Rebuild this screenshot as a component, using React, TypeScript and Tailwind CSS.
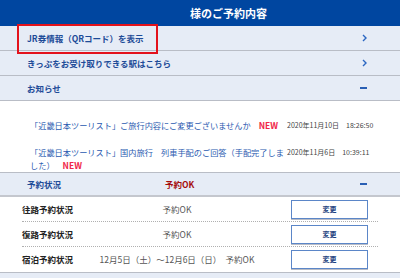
import React from "react";

const jp = { fontFamily: '"Noto Sans CJK JP", "Noto Sans", sans-serif' };

function Chevron() {
  return (
    <svg width="5" height="8" viewBox="0 0 5 8" className="shrink-0">
      <path d="M1 1 L4 4 L1 7" fill="none" stroke="#2a66c2" strokeWidth="1.4" />
    </svg>
  );
}

function Dash() {
  return <span className="block h-[2px] w-[7px] bg-[#2a5fb4]" />;
}

function MenuRow({ label, right }: { label: string; right: React.ReactNode }) {
  return (
    <div className="flex h-[25px] items-center justify-between border-b border-[#b9bdc6] bg-[#e6ecf6] pl-[27px] pr-[33px]">
      <span className="text-[8.5px] font-bold text-[#1d4b98]">{label}</span>
      {right}
    </div>
  );
}

const notices = [
  {
    title: "「近畿日本ツーリスト」ご旅行内容にご変更ございませんか",
    date: "2020年11月10日",
    time: "18:26:50",
  },
  {
    title: "「近畿日本ツーリスト」国内旅行　列車手配のご回答（手配完了しました）",
    date: "2020年11月6日",
    time: "10:39:11",
  },
];

const statuses = [
  { label: "往路予約状況", value: "予約OK" },
  { label: "復路予約状況", value: "予約OK" },
  { label: "宿泊予約状況", value: "12月5日（土）～12月6日（日）　予約OK" },
];

export default function App() {
  return (
    <div className="h-[278px] w-[400px] overflow-hidden bg-white" style={jp}>
      {/* title bar */}
      <div className="h-[26px] bg-[#0046a0] pl-[190px] text-[11px] font-bold leading-[26px] text-white">
        様のご予約内容
      </div>

      <div className="relative">
        <MenuRow label="JR券情報（QRコード）を表示" right={<Chevron />} />
        <div className="pointer-events-none absolute left-[17px] top-[-2px] h-[30px] w-[141px] border-2 border-[#e3121c]" />
      </div>
      <MenuRow label="きっぷをお受け取りできる駅はこちら" right={<Chevron />} />
      <MenuRow label="お知らせ" right={<Dash />} />

      {/* notices */}
      <div className="flex flex-col gap-[14px] border-b border-[#b9bdc6] pt-[18px] pl-[30px]">
        {notices.map((n) => (
          <div key={n.date} className="flex items-start">
            <p className="w-[257px] shrink-0 text-[8.2px] leading-[13px] text-[#2a5ab0]">
              {n.title}
              <span className="ml-[8px] whitespace-nowrap text-[8.5px] font-bold text-[#f0284a]">NEW</span>
            </p>
            <span className="text-[7px] leading-[13px] text-[#444]">{n.date}</span>
            <span className="ml-[7px] text-[7px] leading-[13px] text-[#444]">{n.time}</span>
          </div>
        ))}
      </div>

      {/* reservation status */}
      <div className="flex h-[24px] items-center border-b-2 border-[#c4c7ce] bg-[#e6ecf6] pl-[27px] pr-[33px]">
        <span className="w-[138px] text-[8.5px] font-bold text-[#1d4b98]">予約状況</span>
        <span className="text-[8.5px] font-bold text-[#a50d0d]">予約OK</span>
        <span className="ml-auto">
          <Dash />
        </span>
      </div>

      <div className="mx-[22px]">
        {statuses.map((s, i) => (
          <div
            key={s.label}
            className={`flex h-[25px] items-center ${i < 2 ? "border-b border-dotted border-[#b0b0b0]" : ""}`}
          >
            <span className="w-[56px] text-[8.5px] font-bold text-[#222]">{s.label}</span>
            <span className="w-[198px] text-center text-[8.5px] whitespace-pre text-[#555]">{s.value}</span>
            <button className="ml-auto mr-[10px] h-[19px] w-[77px] border border-[#5b86c8] bg-white text-[7px] font-bold text-[#1d3f80] shadow-[0_1px_0_#b8bcc6]">
              変更
            </button>
          </div>
        ))}
      </div>
      <div className="h-[10px] border-t border-[#b9bdc6] bg-[#e6ecf6]" />
    </div>
  );
}
